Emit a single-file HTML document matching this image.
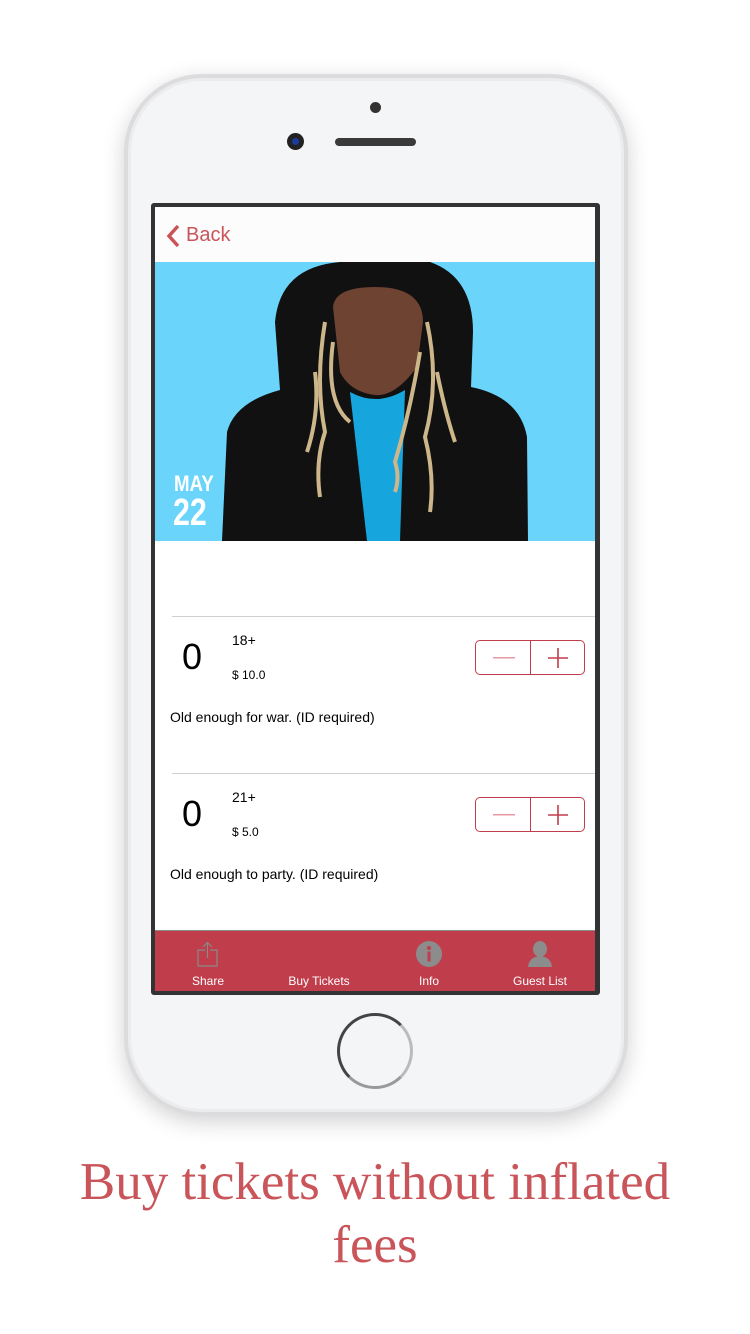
<!DOCTYPE html>
<html><head><meta charset="utf-8"><style>
*{margin:0;padding:0;box-sizing:border-box}
body{width:750px;height:1334px;background:#fff;position:relative;overflow:hidden;font-family:"Liberation Sans",sans-serif}
.abs{position:absolute}
.phone{left:124px;top:74px;width:504px;height:1042px;border-radius:78px;background:#f4f5f7;border:4px solid #dcdcde;box-shadow:0 6px 22px rgba(0,0,0,.18),inset 0 0 0 3px #ececee}
.screen{left:151px;top:203px;width:449px;height:792px;background:#333;border-radius:3px}
.inner{left:155px;top:207px;width:440px;height:784px;background:#fff;overflow:hidden}
.sep{position:absolute;left:17px;right:0;height:1px;background:#cfcfd3}
.num{position:absolute;left:27px;font-size:36px;color:#000}
.lbl{position:absolute;left:77px;font-size:14px}
.price{position:absolute;left:77px;font-size:12px}
.desc{position:absolute;left:15px;font-size:14px}
.step{position:absolute;left:320px;width:110px;height:35px;border:1px solid #c23d4b;border-radius:5px}
.step:after{content:"";position:absolute;left:54px;top:0;bottom:0;width:1px;background:#c23d4b}
.tab{position:absolute;top:0;height:60px;width:110px;text-align:center;color:#fff;font-size:12px}
.tab span{position:absolute;bottom:3px;left:0;right:0}
.cap{left:0;width:750px;text-align:center;color:#c9555a;font-family:"Liberation Serif",serif;font-size:53px;letter-spacing:0px}
</style></head><body>
<div class="abs phone"></div>
<div class="abs" style="left:370px;top:102px;width:11px;height:11px;border-radius:50%;background:#333"></div>
<div class="abs" style="left:287px;top:133px;width:17px;height:17px;border-radius:50%;background:#222"><div style="margin:5px;width:7px;height:7px;border-radius:50%;background:#1b3c9e"></div></div>
<div class="abs" style="left:335px;top:138px;width:81px;height:8px;border-radius:4px;background:#3a3a3a"></div>
<div class="abs" style="left:337px;top:1013px;width:76px;height:76px;border-radius:50%;border:3px solid #444;border-right-color:#bbb;border-bottom-color:#999"></div>
<div class="abs screen"></div>
<div class="abs inner">
 <div style="position:absolute;left:0;top:0;width:440px;height:55px;background:#fcfcfc"></div>
 <svg style="position:absolute;left:9px;top:16px" width="18" height="26"><path d="M14 3 L5 13 L14 23" fill="none" stroke="#c9555a" stroke-width="3.5"/></svg>
 <div style="position:absolute;left:31px;top:17px;font-size:20px;color:#c9555a">Back</div>
 <svg style="position:absolute;left:0;top:55px" width="440" height="279" viewBox="0 0 440 279">
  <rect width="440" height="279" fill="#6ad4fb"/>
  <path d="M67 279 L72 170 Q80 140 125 128 L120 60 Q125 5 185 0 L275 0 Q318 15 318 70 L316 125 Q365 135 372 175 L373 279Z" fill="#111"/>
  <path d="M178 45 Q180 25 220 25 Q268 25 268 60 L262 105 Q240 135 220 133 Q195 130 185 110Z" fill="#6e4331"/>
  <path d="M195 130 Q222 145 250 128 L245 279 L212 279Z" fill="#16a6dd"/>
  <g stroke="#cdb68a" stroke-width="4" fill="none">
   <path d="M170 60 Q160 120 170 170 Q160 200 165 235"/><path d="M178 80 Q170 140 195 160"/><path d="M160 110 Q165 150 152 190"/>
   <path d="M272 60 Q285 120 270 175 Q280 215 275 250"/><path d="M265 90 Q255 150 240 200 Q245 215 240 230"/><path d="M282 110 Q290 150 300 180"/>
  </g>
  <text x="19" y="229" font-family="Liberation Sans" font-weight="bold" font-size="22" fill="#fff" transform="scale(0.85 1)" style="transform-origin:19px 229px">MAY</text>
  <text x="18" y="263" font-family="Liberation Sans" font-weight="bold" font-size="38" fill="#fff" transform="scale(0.8 1)" style="transform-origin:18px 263px">22</text>
 </svg>
 <div class="sep" style="top:409px"></div>
 <div class="num" style="top:429px">0</div>
 <div class="lbl" style="top:425px">18+</div>
 <div class="price" style="top:461px">$ 10.0</div>
 <div class="step" style="top:433px"><svg style="position:absolute;left:17px;top:16px" width="22" height="2"><rect width="22" height="1.5" fill="#e79aa2"/></svg><svg style="position:absolute;left:72px;top:7px" width="20" height="20"><path d="M10 0V20M0 10H20" stroke="#c23d4b" stroke-width="1.6"/></svg></div>
 <div class="desc" style="top:502px">Old enough for war. (ID required)</div>
 <div class="sep" style="top:566px"></div>
 <div class="num" style="top:586px">0</div>
 <div class="lbl" style="top:582px">21+</div>
 <div class="price" style="top:618px">$ 5.0</div>
 <div class="step" style="top:590px"><svg style="position:absolute;left:17px;top:16px" width="22" height="2"><rect width="22" height="1.5" fill="#e79aa2"/></svg><svg style="position:absolute;left:72px;top:7px" width="20" height="20"><path d="M10 0V20M0 10H20" stroke="#c23d4b" stroke-width="1.6"/></svg></div>
 <div class="desc" style="top:659px">Old enough to party. (ID required)</div>
 <div style="position:absolute;left:0;top:723px;width:440px;height:61px;background:#c03d4b;border-top:1px solid #888">
  <div class="tab" style="left:-2px"><svg style="position:absolute;left:44px;top:10px" width="22" height="26"><path d="M8 9H1V25H20V9H13M10.5 17V2M6 6L10.5 1.5L15 6" fill="none" stroke="#8a8a8a" stroke-width="1.2"/></svg><span>Share</span></div>
  <div class="tab" style="left:109px"><span>Buy Tickets</span></div>
  <div class="tab" style="left:219px"><svg style="position:absolute;left:41px;top:9px" width="28" height="28"><circle cx="14" cy="14" r="13" fill="#8c8c8c"/><circle cx="14" cy="8" r="2" fill="#c03d4b"/><rect x="12.5" y="11.5" width="3" height="10" fill="#c03d4b"/></svg><span>Info</span></div>
  <div class="tab" style="left:330px"><svg style="position:absolute;left:42px;top:9px" width="26" height="28"><ellipse cx="13" cy="9" rx="7" ry="8" fill="#8c8c8c"/><path d="M1 27Q2 17 13 16Q24 17 25 27Z" fill="#8c8c8c"/></svg><span>Guest List</span></div>
 </div>
</div>
<div class="abs cap" style="top:1152px">Buy tickets without inflated</div>
<div class="abs cap" style="top:1215px">fees</div>
</body></html>
